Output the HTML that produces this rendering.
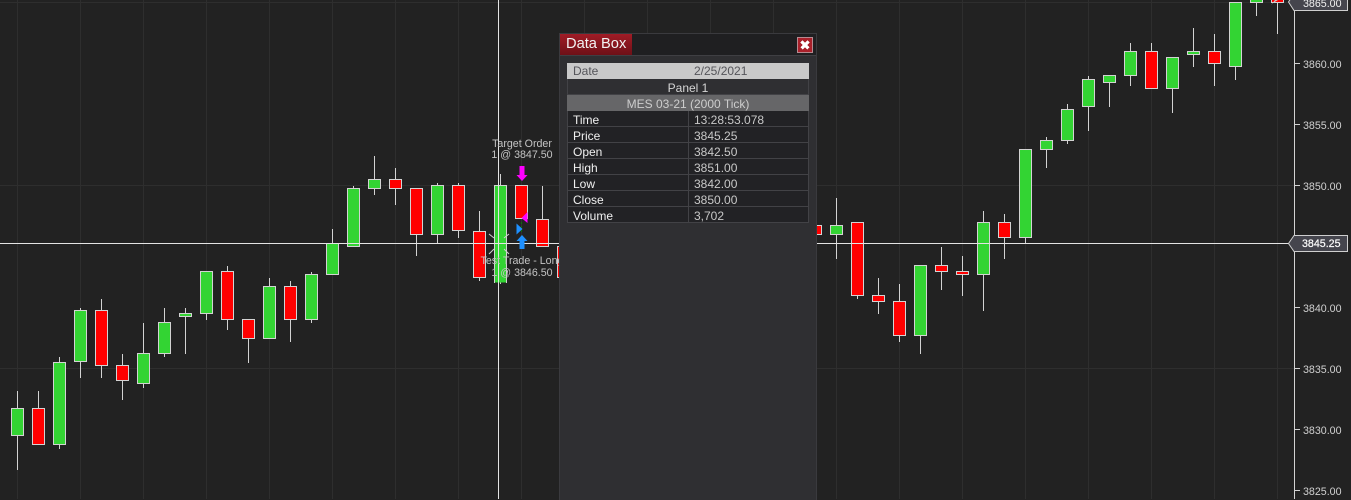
<!DOCTYPE html>
<html><head><meta charset="utf-8"><title>Chart</title>
<style>
html,body{margin:0;padding:0;background:#222;width:1351px;height:499px;overflow:hidden}
svg{position:absolute;left:0;top:0;display:block}
text{font-family:"Liberation Sans",Arial,sans-serif;font-size:10.67px}
#box{position:absolute;left:559px;top:33px;width:256px;height:466px;background:#2f2f32;border:1px solid #3a3a3e;border-bottom:0;font-family:"Liberation Sans",Arial,sans-serif;font-size:12px}
#hd{position:absolute;left:0;top:0;width:256px;height:21px;background:#1f1f21;border-bottom:1px solid #3f3f43}
#tab{position:absolute;left:0;top:0;width:72px;height:21px;background:linear-gradient(#a01c26,#6e1017);color:#f2f2f2;font-size:14.67px;line-height:21px;padding-left:6px;box-sizing:border-box;white-space:nowrap}
#x{position:absolute;left:237px;top:3px;width:16px;height:16px;background:#a9202a;box-shadow:inset 0 0 0 1px #b58a90}
.r{position:absolute;left:7px;width:242px;height:16px;line-height:19px;box-sizing:border-box;border:1px solid #424246;border-top:0;white-space:nowrap}
.d{background:#222225;color:#d6d6d6}
.d b,.d i{position:absolute;top:0;font-weight:normal;font-style:normal}
.d b{left:5px;color:#f0f0f0}
.d i{left:126px;color:#c8c8c8}
.d u{position:absolute;left:120px;top:0;height:16px;width:1px;background:#424246}
.c{text-align:center}
</style></head><body>
<svg width="1351" height="499" viewBox="0 0 1351 499" shape-rendering="crispEdges">
<rect width="1351" height="499" fill="#222"/>
<path stroke="#2e2e2e" fill="none" d="M17.5 0V499M80.5 0V499M143.5 0V499M206.5 0V499M269.5 0V499M332.5 0V499M395.5 0V499M458.5 0V499M521.5 0V499M584.5 0V499M647.5 0V499M710.5 0V499M773.5 0V499M836.5 0V499M899.5 0V499M962.5 0V499M1025.5 0V499M1088.5 0V499M1151.5 0V499M1214.5 0V499M1277.5 0V499M0 2.5H1294M0 185.5H1294M0 368.5H1294"/>
<path stroke="#d3d3d3" fill="none" d="M17.5 391V470M38.5 391V445M59.5 357V449M80.5 308V378M101.5 299V378M122.5 354V400M143.5 323V388M164.5 308V357M185.5 308V354M206.5 271V320M227.5 266V330M248.5 319V363M269.5 278V339M290.5 281V342M311.5 272V323M332.5 229V275M353.5 186V247M374.5 156V195M395.5 168V205M416.5 188V256M437.5 183V243M458.5 183V238M479.5 211V281M500.5 174V284M542.5 186V247M836.5 198V259M857.5 222V299M878.5 278V314M899.5 284V342M920.5 265V354M941.5 247V290M962.5 256V296M983.5 211V311M1004.5 214V259M1025.5 149V243M1046.5 137V168M1067.5 104V144M1088.5 76V131M1109.5 75V107M1130.5 43V86M1151.5 43V89M1172.5 57V113M1193.5 28V67M1214.5 34V86M1235.5 2V80M1256.5 0V16M1277.5 0V34"/>
<g fill="#33d433" stroke="#d3d3d3">
<rect x="11.5" y="408.5" width="12" height="27"/>
<rect x="53.5" y="362.5" width="12" height="82"/>
<rect x="74.5" y="310.5" width="12" height="51"/>
<rect x="137.5" y="353.5" width="12" height="30"/>
<rect x="158.5" y="322.5" width="12" height="31"/>
<rect x="179.5" y="313.5" width="12" height="3"/>
<rect x="200.5" y="271.5" width="12" height="42"/>
<rect x="263.5" y="286.5" width="12" height="52"/>
<rect x="305.5" y="274.5" width="12" height="45"/>
<rect x="326.5" y="243.5" width="12" height="31"/>
<rect x="347.5" y="188.5" width="12" height="58"/>
<rect x="368.5" y="179.5" width="12" height="9"/>
<rect x="431.5" y="185.5" width="12" height="49"/>
<rect x="494.5" y="185.5" width="12" height="97" stroke="none"/>
<path d="M494.5 283V185.5H506.5V283" fill="none"/>
<rect x="830.5" y="225.5" width="12" height="9"/>
<rect x="914.5" y="265.5" width="12" height="70"/>
<rect x="977.5" y="222.5" width="12" height="52"/>
<rect x="1019.5" y="149.5" width="12" height="88"/>
<rect x="1040.5" y="140.5" width="12" height="9"/>
<rect x="1061.5" y="109.5" width="12" height="31"/>
<rect x="1082.5" y="79.5" width="12" height="27"/>
<rect x="1103.5" y="75.5" width="12" height="7"/>
<rect x="1124.5" y="51.5" width="12" height="24"/>
<rect x="1166.5" y="57.5" width="12" height="31"/>
<rect x="1187.5" y="51.5" width="12" height="3"/>
<rect x="1229.5" y="2.5" width="12" height="64"/>
<rect x="1250.5" y="-3.5" width="12" height="6"/>
</g>
<g fill="#ff0000" stroke="#d3d3d3">
<rect x="32.5" y="408.5" width="12" height="36"/>
<rect x="95.5" y="310.5" width="12" height="55"/>
<rect x="116.5" y="365.5" width="12" height="15"/>
<rect x="221.5" y="271.5" width="12" height="48"/>
<rect x="242.5" y="319.5" width="12" height="19"/>
<rect x="284.5" y="286.5" width="12" height="33"/>
<rect x="389.5" y="179.5" width="12" height="9"/>
<rect x="410.5" y="188.5" width="12" height="46"/>
<rect x="452.5" y="185.5" width="12" height="45"/>
<rect x="473.5" y="231.5" width="12" height="46"/>
<rect x="515.5" y="185.5" width="12" height="33"/>
<rect x="536.5" y="219.5" width="12" height="27"/>
<rect x="557.5" y="246.5" width="12" height="31"/>
<rect x="809.5" y="225.5" width="12" height="9"/>
<rect x="851.5" y="222.5" width="12" height="73"/>
<rect x="872.5" y="295.5" width="12" height="6"/>
<rect x="893.5" y="301.5" width="12" height="34"/>
<rect x="935.5" y="265.5" width="12" height="6"/>
<rect x="956.5" y="271.5" width="12" height="3"/>
<rect x="998.5" y="222.5" width="12" height="15"/>
<rect x="1145.5" y="51.5" width="12" height="37"/>
<rect x="1208.5" y="51.5" width="12" height="12"/>
<rect x="1271.5" y="-3.5" width="12" height="6"/>
</g>
<path d="M1271 5L1275 0H1278L1273 3Z" fill="#c8c8c8" shape-rendering="auto"/>
<path stroke="#e4e4e4" fill="none" d="M0 243.5H1294M498.5 0V499"/>
<path stroke="#d0d0d0" fill="none" shape-rendering="auto" d="M489 234L494 238M509 234L504 238M489 254L494 249M509 254L504 249"/>
<g shape-rendering="auto">
<path d="M519.5 166H524.5V175H527.5L522 181L516.5 175H519.5Z" fill="#ff00ff"/>
<path d="M527.5 212V223L521.5 218Z" fill="#ff00ff"/>
<path d="M516.5 223.5V234.5L522.5 229Z" fill="#1e90ff"/>
<path d="M522 235L527.5 241H524.5V249H519.5V241H516.5Z" fill="#1e90ff"/>
<path d="M521.5 222V234" stroke="#0c6b0c" stroke-dasharray="2 2" fill="none"/>
</g>
<g fill="#c4c4c4" text-anchor="middle">
<text x="522" y="147">Target Order</text>
<text x="522" y="158">1 @ 3847.50</text>
<text x="522" y="264">Test Trade - Long</text>
<text x="522" y="276">1 @ 3846.50</text>
</g>
<path stroke="#d3d3d3" fill="none" d="M1294.5 10V499M1295 63.5H1300M1295 124.5H1300M1295 185.5H1300M1295 307.5H1300M1295 368.5H1300M1295 429.5H1300M1295 490.5H1300"/>
<g fill="#d0d0d0">
<text x="1303" y="68">3860.00</text>
<text x="1303" y="129">3855.00</text>
<text x="1303" y="190">3850.00</text>
<text x="1303" y="312">3840.00</text>
<text x="1303" y="373">3835.00</text>
<text x="1303" y="434">3830.00</text>
<text x="1303" y="495">3825.00</text>
</g>
<g shape-rendering="auto" fill="#45454d" stroke="#cfcfcf">
<path d="M1347.5 -6.5V10.5H1294L1288.5 2L1294 -6.5Z"/>
<path d="M1347.5 235.5V251.5H1294L1288.5 243.5L1294 235.5Z"/>
</g>
<text x="1303" y="7" fill="#f0f0f0">3865.00</text>
<text x="1302" y="247" fill="#ffffff" stroke="#ffffff" stroke-width="0.2">3845.25</text>
</svg>
<div id="box">
<div id="hd"></div>
<div id="tab">Data Box</div>
<div id="x"><svg width="16" height="16" viewBox="0 0 16 16"><path d="M4.5 4.5L11.5 11.5M11.5 4.5L4.5 11.5" stroke="#fff" stroke-width="3.4" fill="none" shape-rendering="crispEdges"/></svg></div>
<div class="r" style="top:29px;height:16px;background:#c9c9c9;color:#55555a;border:0;line-height:16px"><span style="position:absolute;left:6px">Date</span><span style="position:absolute;left:127px">2/25/2021</span></div>
<div class="r c" style="top:45px;color:#d6d6d6;background:#2f2f32">Panel 1</div>
<div class="r c" style="top:61px;background:#666668;color:#cdcdcd;border:0;line-height:19px">MES 03-21 (2000 Tick)</div>
<div class="r d" style="top:77px"><b>Time</b><u></u><i>13:28:53.078</i></div>
<div class="r d" style="top:93px"><b>Price</b><u></u><i>3845.25</i></div>
<div class="r d" style="top:109px"><b>Open</b><u></u><i>3842.50</i></div>
<div class="r d" style="top:125px"><b>High</b><u></u><i>3851.00</i></div>
<div class="r d" style="top:141px"><b>Low</b><u></u><i>3842.00</i></div>
<div class="r d" style="top:157px"><b>Close</b><u></u><i>3850.00</i></div>
<div class="r d" style="top:173px"><b>Volume</b><u></u><i>3,702</i></div>
</div>
</body></html>
